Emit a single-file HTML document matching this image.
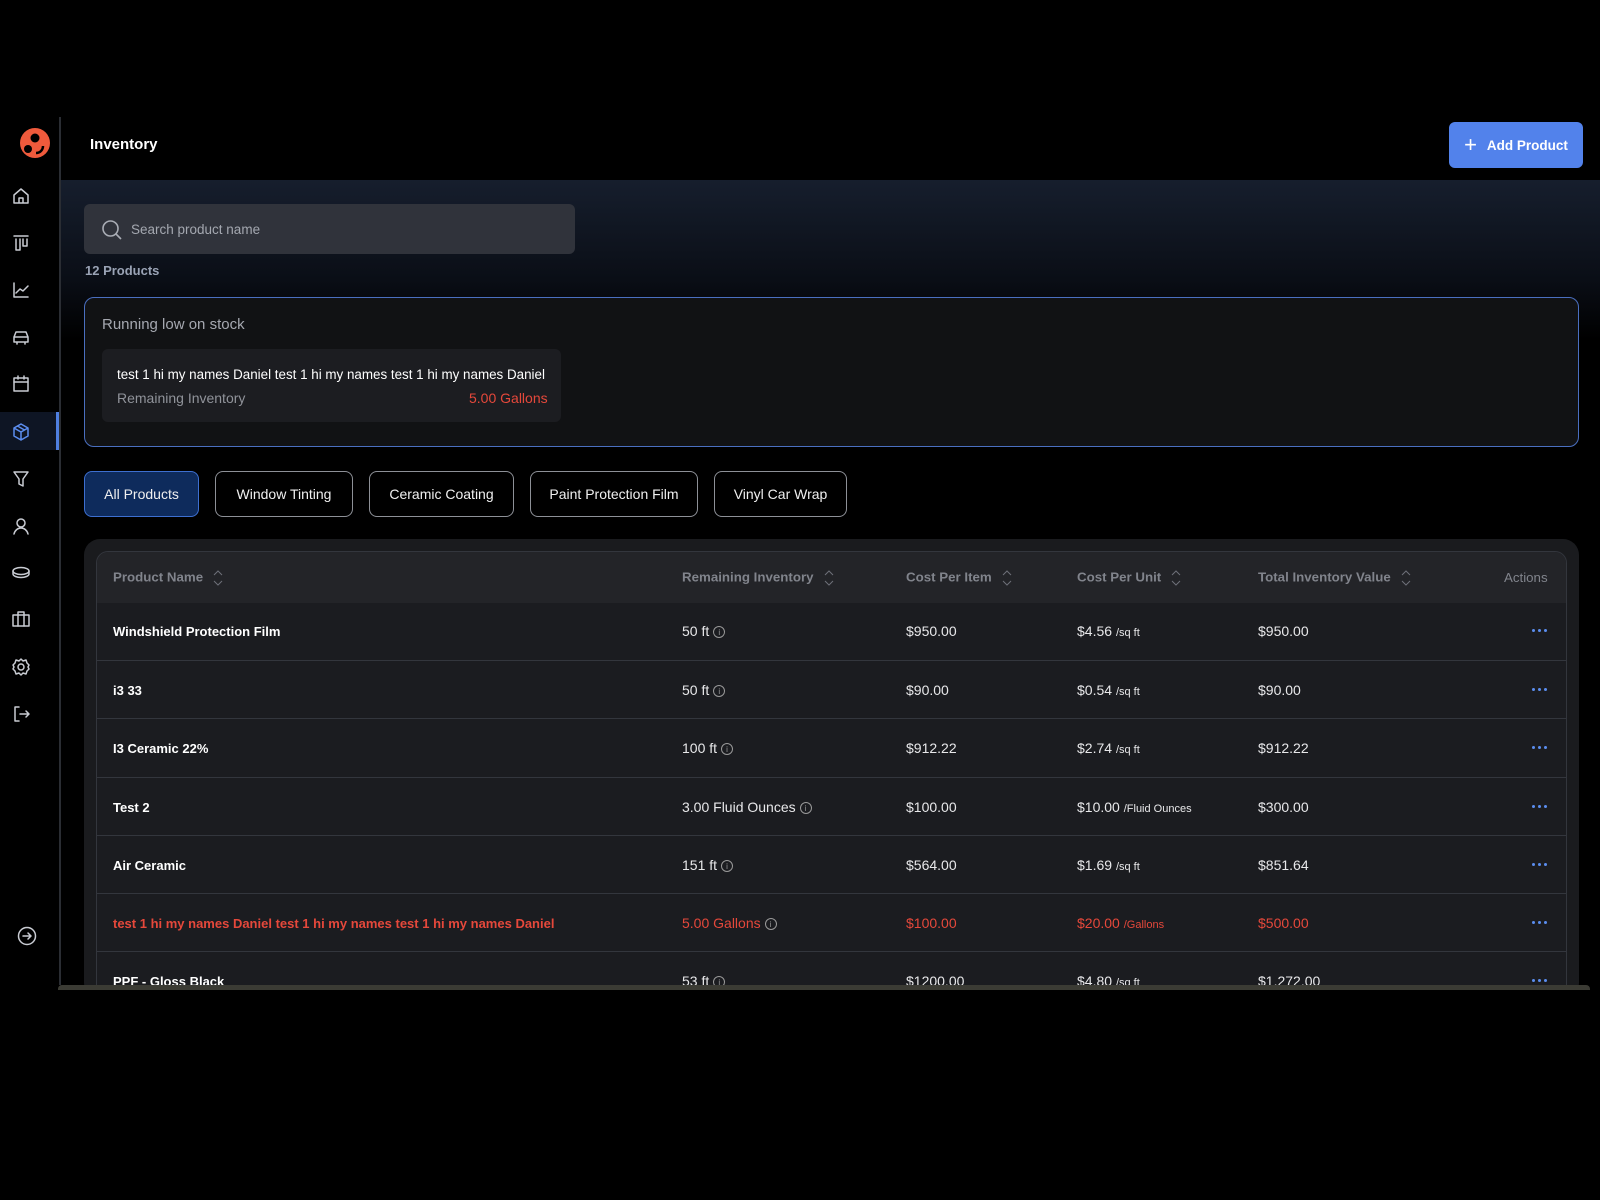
<!DOCTYPE html>
<html><head><meta charset="utf-8"><style>
*{box-sizing:border-box;margin:0;padding:0}
body{width:1600px;height:1200px;background:#000;font-family:"Liberation Sans",sans-serif;position:relative;overflow:hidden;color:#e8e8ea}
.abs{position:absolute}
.side{left:0;top:117px;width:61px;height:868px;border-right:2px solid #2a2d33}
.ic{position:absolute;left:11px;width:20px;height:20px}
.ic svg{width:20px;height:20px;fill:none;stroke:#c9ccd3;stroke-width:1.5;stroke-linecap:round;stroke-linejoin:round}
.content{left:61px;top:180px;width:1539px;height:805px;background:linear-gradient(#161e2d 0px,#0a0e16 100px,#000 160px)}
.tab{position:absolute;top:471px;height:46px;border:1px solid #8d9097;border-radius:8px;font-size:14px;color:#f0f0f0;display:flex;align-items:center;justify-content:center}
.th{position:absolute;top:569px;font-size:13.3px;font-weight:bold;color:#81848c;white-space:nowrap}
.row{position:absolute;left:96px;width:1471px;height:58px;border-top:1px solid #33363d;font-size:14px}
.row span{position:absolute;top:21px;white-space:nowrap}
.row .n{left:17px;font-weight:bold;color:#fff;font-size:13px;top:22px}
.r span{color:#e5483b!important}
.u{font-size:11px}
.dots{left:1436px;top:17px!important}
.dots i{display:inline-block;width:3px;height:3px;border-radius:50%;background:#5b8def;margin-right:3px}
.i{display:inline-block;width:12px;height:12px;border:1px solid #999;border-radius:50%;font-size:8px;text-align:center;line-height:11px;margin-left:4px;vertical-align:1px;color:#999;font-style:normal}
.sort{display:inline-block;margin-left:10px;vertical-align:middle}
</style></head><body>
<div class="abs side">
 <svg class="abs" style="left:19px;top:10px" width="32" height="32" viewBox="0 0 32 32"><circle cx="16" cy="16" r="15" fill="#ef5a3c"/><circle cx="16" cy="11" r="4.5" fill="#000"/><circle cx="9" cy="22" r="4" fill="#000"/><path d="M17 26c4 0 7-3 7-7" stroke="#000" stroke-width="2.5" fill="none"/></svg>
</div>
<div class="ic" style="top:186px"><svg viewBox="0 0 20 20"><path d="M3 9l7-6 7 6v8H3z M8 17v-5h4v5"/></svg></div>
<div class="ic" style="top:233px"><svg viewBox="0 0 20 20"><path d="M3 3h14 M5 6v11h4V6 M12 6v7h4V6"/></svg></div>
<div class="ic" style="top:280px"><svg viewBox="0 0 20 20"><path d="M3 3v14h14 M5 13l4-4 3 2 5-5"/></svg></div>
<div class="ic" style="top:327px"><svg viewBox="0 0 20 20"><path d="M3 10l2-5h10l2 5v5H3z M3 10h14 M6 15v2 M14 15v2"/></svg></div>
<div class="ic" style="top:374px"><svg viewBox="0 0 20 20"><rect x="3" y="4" width="14" height="13"/><path d="M3 8h14 M7 2v3 M13 2v3"/></svg></div>
<div class="abs" style="left:0;top:412px;width:59px;height:38px;background:#0e1524;border-right:3px solid #4f7fe0"></div>
<div class="ic" style="top:422px"><svg viewBox="0 0 20 20" style="stroke:#5b8def"><path d="M10 2l7 4v8l-7 4-7-4V6z M3 6l7 4 7-4 M10 10v8 M6.5 4l7 4"/></svg></div>
<div class="ic" style="top:469px"><svg viewBox="0 0 20 20"><path d="M3 3h14l-5 7v7l-4-2v-5z"/></svg></div>
<div class="ic" style="top:516px"><svg viewBox="0 0 20 20"><circle cx="10" cy="7" r="4"/><path d="M3 18c1-4 4-6 7-6s6 2 7 6"/></svg></div>
<div class="ic" style="top:562px"><svg viewBox="0 0 20 20"><ellipse cx="10" cy="9" rx="8" ry="3.5"/><path d="M2 9v3c0 2 4 3.5 8 3.5s8-1.5 8-3.5V9"/></svg></div>
<div class="ic" style="top:609px"><svg viewBox="0 0 20 20"><rect x="2" y="6" width="16" height="11"/><path d="M7 6V3h6v3 M7 6v11 M13 6v11"/></svg></div>
<div class="ic" style="top:657px"><svg viewBox="0 0 20 20"><circle cx="10" cy="10" r="3"/><path d="M10 2l2 2 3-1 1 3 2 2-1 2 1 2-2 2-1 3-3-1-2 2-2-2-3 1-1-3-2-2 1-2-1-2 2-2 1-3 3 1z"/></svg></div>
<div class="ic" style="top:704px"><svg viewBox="0 0 20 20"><path d="M8 3H4v14h4 M9 10h9 M15 7l3 3-3 3"/></svg></div>
<div class="ic" style="top:926px;left:17px"><svg viewBox="0 0 20 20"><circle cx="10" cy="10" r="8.5"/><path d="M6 10h8 M11 7l3 3-3 3"/></svg></div>

<div class="abs" style="left:90px;top:136px;font-size:15px;font-weight:bold;color:#fff">Inventory</div>
<div class="abs" style="left:1449px;top:122px;width:134px;height:46px;background:#5282eb;border-radius:6px;color:#fff;font-size:13.5px;font-weight:bold;display:flex;align-items:center;justify-content:center"><span style="font-size:22px;font-weight:normal;margin-right:10px;line-height:1">+</span>Add Product</div>

<div class="abs content"></div>
<div class="abs" style="left:84px;top:204px;width:491px;height:50px;background:#30333b;border-radius:6px"></div>
<svg class="abs" style="left:101px;top:219px" width="22" height="22" viewBox="0 0 22 22"><circle cx="9.5" cy="9.5" r="7.5" fill="none" stroke="#a9adb5" stroke-width="1.6"/><path d="M15 15l5 5" stroke="#a9adb5" stroke-width="1.6"/></svg>
<div class="abs" style="left:131px;top:222px;font-size:13.5px;color:#a4a8b0">Search product name</div>
<div class="abs" style="left:85px;top:263px;font-size:13px;font-weight:bold;color:#9aa3b5">12 Products</div>

<div class="abs" style="left:84px;top:297px;width:1495px;height:150px;border:1px solid #4a6fc0;border-radius:10px;background:#111214"></div>
<div class="abs" style="left:102px;top:316px;font-size:15px;color:#a5a8b0">Running low on stock</div>
<div class="abs" style="left:102px;top:349px;width:459px;height:73px;background:#1c1d21;border-radius:6px"></div>
<div class="abs" style="left:117px;top:367px;font-size:13.4px;color:#fff;white-space:nowrap">test 1 hi my names Daniel test 1 hi my names test 1 hi my names Daniel</div>
<div class="abs" style="left:117px;top:390px;font-size:14px;color:#90939a">Remaining Inventory</div>
<div class="abs" style="left:469px;top:390px;font-size:14px;color:#e5483b">5.00 Gallons</div>

<div class="tab" style="left:84px;width:115px;background:#0e2b5c;border-color:#3d6fd0">All Products</div>
<div class="tab" style="left:215px;width:138px">Window Tinting</div>
<div class="tab" style="left:369px;width:145px">Ceramic Coating</div>
<div class="tab" style="left:530px;width:168px">Paint Protection Film</div>
<div class="tab" style="left:714px;width:133px">Vinyl Car Wrap</div>

<div class="abs" style="left:84px;top:539px;width:1495px;height:460px;background:#1a1b1e;border-radius:16px"></div>
<div class="abs" style="left:96px;top:551px;width:1471px;height:450px;background:#1b1c20;border:1px solid #33363d;border-radius:12px;overflow:hidden"><div style="height:51px;background:#232428"></div></div>
<div class="th" style="left:113px">Product Name<svg class="sort" width="10" height="18" viewBox="0 0 10 18"><path d="M1 6l4-4 4 4 M1 12l4 4 4-4" stroke="#6d7079" fill="none"/></svg></div>
<div class="th" style="left:682px">Remaining Inventory<svg class="sort" width="10" height="18" viewBox="0 0 10 18"><path d="M1 6l4-4 4 4 M1 12l4 4 4-4" stroke="#6d7079" fill="none"/></svg></div>
<div class="th" style="left:906px">Cost Per Item<svg class="sort" width="10" height="18" viewBox="0 0 10 18"><path d="M1 6l4-4 4 4 M1 12l4 4 4-4" stroke="#6d7079" fill="none"/></svg></div>
<div class="th" style="left:1077px">Cost Per Unit<svg class="sort" width="10" height="18" viewBox="0 0 10 18"><path d="M1 6l4-4 4 4 M1 12l4 4 4-4" stroke="#6d7079" fill="none"/></svg></div>
<div class="th" style="left:1258px">Total Inventory Value<svg class="sort" width="10" height="18" viewBox="0 0 10 18"><path d="M1 6l4-4 4 4 M1 12l4 4 4-4" stroke="#6d7079" fill="none"/></svg></div>
<div class="th" style="left:1504px;font-weight:normal;top:570px">Actions</div>

<div class="row" style="top:602px;border-top:none"><span class="n">Windshield Protection Film</span><span style="left:586px">50 ft<i class="i">i</i></span><span style="left:810px">$950.00</span><span style="left:981px">$4.56 <b class="u" style="font-weight:normal">/sq ft</b></span><span style="left:1162px">$950.00</span><span class="dots"><i></i><i></i><i></i></span></div>
<div class="row" style="top:660px"><span class="n">i3 33</span><span style="left:586px">50 ft<i class="i">i</i></span><span style="left:810px">$90.00</span><span style="left:981px">$0.54 <b class="u" style="font-weight:normal">/sq ft</b></span><span style="left:1162px">$90.00</span><span class="dots"><i></i><i></i><i></i></span></div>
<div class="row" style="top:718px"><span class="n">I3 Ceramic 22%</span><span style="left:586px">100 ft<i class="i">i</i></span><span style="left:810px">$912.22</span><span style="left:981px">$2.74 <b class="u" style="font-weight:normal">/sq ft</b></span><span style="left:1162px">$912.22</span><span class="dots"><i></i><i></i><i></i></span></div>
<div class="row" style="top:777px"><span class="n">Test 2</span><span style="left:586px">3.00 Fluid Ounces<i class="i">i</i></span><span style="left:810px">$100.00</span><span style="left:981px">$10.00 <b class="u" style="font-weight:normal">/Fluid Ounces</b></span><span style="left:1162px">$300.00</span><span class="dots"><i></i><i></i><i></i></span></div>
<div class="row" style="top:835px"><span class="n">Air Ceramic</span><span style="left:586px">151 ft<i class="i">i</i></span><span style="left:810px">$564.00</span><span style="left:981px">$1.69 <b class="u" style="font-weight:normal">/sq ft</b></span><span style="left:1162px">$851.64</span><span class="dots"><i></i><i></i><i></i></span></div>
<div class="row r" style="top:893px"><span class="n">test 1 hi my names Daniel test 1 hi my names test 1 hi my names Daniel</span><span style="left:586px">5.00 Gallons<i class="i">i</i></span><span style="left:810px">$100.00</span><span style="left:981px">$20.00 <b class="u" style="font-weight:normal">/Gallons</b></span><span style="left:1162px">$500.00</span><span class="dots"><i></i><i></i><i></i></span></div>
<div class="row" style="top:951px"><span class="n">PPF - Gloss Black</span><span style="left:586px">53 ft<i class="i">i</i></span><span style="left:810px">$1200.00</span><span style="left:981px">$4.80 <b class="u" style="font-weight:normal">/sq ft</b></span><span style="left:1162px">$1,272.00</span><span class="dots"><i></i><i></i><i></i></span></div>

<div class="abs" style="left:0;top:985px;width:1600px;height:215px;background:#000"></div>
<div class="abs" style="left:58px;top:985px;width:1532px;height:5px;background:#3b3b34;border-radius:4px 4px 0 0"></div>
</body></html>
